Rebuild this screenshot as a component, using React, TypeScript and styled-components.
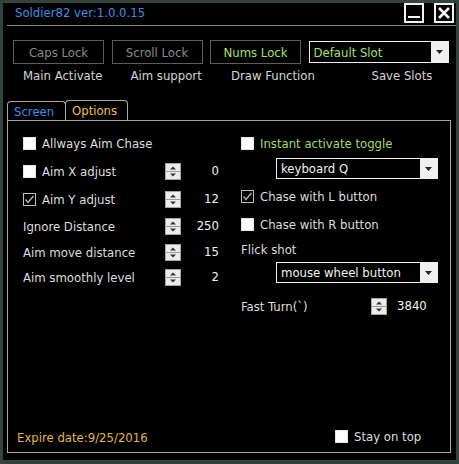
import React from "react";
import styled, { createGlobalStyle } from "styled-components";

const Global = createGlobalStyle`
  html, body { margin: 0; padding: 0; background: #000; }
  body {
    font-family: "DejaVu Sans Condensed", "DejaVu Sans", sans-serif;
    font-stretch: semi-condensed;
    font-size: 13px;
    color: #dcdcdc;
  }
  * { box-sizing: border-box; }
`;

const Window = styled.div`
  width: 459px;
  height: 464px;
  border: 3px solid #34433f;
  border-bottom-width: 4px;
  background: #000;
  display: flex;
  flex-direction: column;
`;

const TitleBar = styled.div`
  height: 23px;
  margin-left: 4px;
  border-bottom: 1px solid #8c8c8c;
  display: flex;
  align-items: flex-start;
`;

const Title = styled.div`
  flex: 1;
  color: #3f8fe6;
  padding-left: 8px;
  line-height: 20px;
`;

const TitleButtons = styled.div`
  display: flex;
  gap: 10px;
  margin-right: 2px;
`;

const TitleButton = styled.div`
  width: 20px;
  height: 20px;
  border: 2px solid #f2f2f2;
  display: flex;
  align-items: center;
  justify-content: center;
`;

const Header = styled.div`
  padding: 14px 0 0 10px;
`;

const ButtonRow = styled.div`
  display: grid;
  grid-template-columns: 91px 91px 91px 140px;
  column-gap: 7.5px;
  height: 24px;
`;

const KeyButton = styled.div<{ $color: string }>`
  border: 1px solid #5e5e5e;
  color: ${(p) => p.$color};
  display: flex;
  align-items: center;
  justify-content: center;
`;

const LabelRow = styled.div`
  display: grid;
  grid-template-columns: 91px 91px 91px 140px;
  column-gap: 7.5px;
  margin-top: 5px;
  height: 14px;
  line-height: 14px;
`;

const ColLabel = styled.div<{ $indent: number }>`
  padding-left: ${(p) => p.$indent}px;
  white-space: nowrap;
  color: #d4d4d4;
`;

const SelectBox = styled.div<{ $width: number; $height: number; $color: string; $indent?: number }>`
  width: ${(p) => p.$width}px;
  height: ${(p) => p.$height}px;
  margin-left: ${(p) => p.$indent ?? 0}px;
  align-self: center;
  border: 1px solid #f0f0f0;
  background: #000;
  color: ${(p) => p.$color};
  display: flex;
  align-items: stretch;
`;

const SelectText = styled.div`
  flex: 1;
  padding-left: 4px;
  display: flex;
  align-items: center;
  white-space: nowrap;
`;

const SelectArrow = styled.div`
  width: 17px;
  background: #f0f0f0;
  display: flex;
  align-items: center;
  justify-content: center;
`;

const TabStrip = styled.div`
  display: flex;
  align-items: flex-end;
  margin: 17px 0 0 4px;
  height: 20px;
`;

const Tab = styled.div<{ $color: string; $active?: boolean; $width: number }>`
  width: ${(p) => p.$width}px;
  height: ${(p) => (p.$active ? 20 : 19)}px;
  border: 1px solid #a8a8a8;
  border-bottom: none;
  border-radius: 4px 4px 0 0;
  color: ${(p) => p.$color};
  padding-left: 6px;
  line-height: 19px;
  margin-left: ${(p) => (p.$active ? -1 : 0)}px;
`;

const Panel = styled.div`
  flex: 1;
  margin: 0 5px 7px 4px;
  border: 1px solid #a8a8a8;
  display: flex;
  flex-direction: column;
`;

const Columns = styled.div`
  display: grid;
  grid-template-columns: 197px 197px;
  column-gap: 21px;
  align-items: start;
  padding: 8px 0 0 15px;
`;

const Column = styled.div`
  display: flex;
  flex-direction: column;
`;

const Row = styled.div<{ $h: number; $mt?: number }>`
  height: ${(p) => p.$h}px;
  margin-top: ${(p) => p.$mt ?? 0}px;
  display: flex;
  align-items: center;
  white-space: nowrap;
`;

const SpinRow = styled.div<{ $h: number; $cols: string; $mt?: number }>`
  height: ${(p) => p.$h}px;
  margin-top: ${(p) => p.$mt ?? 0}px;
  display: grid;
  grid-template-columns: ${(p) => p.$cols};
  align-items: center;
  white-space: nowrap;
`;

const Value = styled.div<{ $align: "left" | "right" }>`
  color: #f2f2f2;
  text-align: ${(p) => p.$align};
  padding-right: ${(p) => (p.$align === "right" ? 1 : 0)}px;
  padding-left: ${(p) => (p.$align === "left" ? 10 : 0)}px;
  margin-top: -2px;
`;

const Check = styled.div`
  display: flex;
  align-items: center;
  gap: 6px;
`;

const Box = styled.div<{ $checked?: boolean }>`
  width: 13px;
  height: 13px;
  flex: none;
  background: ${(p) => (p.$checked ? "#000" : "#fdfdfd")};
  border: 1px solid ${(p) => (p.$checked ? "#bdbdbd" : "#e4e4e4")};
  display: flex;
  align-items: center;
  justify-content: center;
`;

const Text = styled.span<{ $color?: string }>`
  color: ${(p) => p.$color ?? "#dedede"};
`;

const Footer = styled.div`
  margin-top: auto;
  display: grid;
  grid-template-columns: 318px auto;
  align-items: center;
  height: 20px;
  padding-left: 9px;
  margin-bottom: 6px;
`;

const Expire = styled.div`
  color: #e6b836;
  margin-top: 3px;
`;

const Arrow = () => (
  <svg width="7" height="4" viewBox="0 0 7 4">
    <polygon points="0,0 7,0 3.5,4" fill="#222" />
  </svg>
);

const Spin = () => (
  <svg width="16" height="17" viewBox="0 0 16 17">
    <rect x="0.5" y="0.5" width="15" height="16" fill="#ececec" stroke="#a4a4a4" />
    <line x1="1" y1="8.5" x2="15" y2="8.5" stroke="#9a9a9a" />
    <polygon points="5,6.5 11,6.5 8,3.5" fill="#333" />
    <polygon points="5,10.5 11,10.5 8,13.5" fill="#333" />
  </svg>
);

const CheckBox = ({ checked }: { checked?: boolean }) => (
  <Box $checked={checked}>
    {checked && (
      <svg width="11" height="11" viewBox="0 0 11 11">
        <polyline points="1.5,5.5 4,8.5 9.5,2" fill="none" stroke="#b4b4b4" strokeWidth="1.4" />
      </svg>
    )}
  </Box>
);

const Select = ({ text, width, height, color, indent }: { text: string; width: number; height: number; color: string; indent?: number }) => (
  <SelectBox $width={width} $height={height} $color={color} $indent={indent}>
    <SelectText>{text}</SelectText>
    <SelectArrow>
      <Arrow />
    </SelectArrow>
  </SelectBox>
);

export default function App() {
  return (
    <>
      <Global />
      <Window>
        <TitleBar>
          <Title>Soldier82 ver:1.0.0.15</Title>
          <TitleButtons>
            <TitleButton>
              <svg width="16" height="16" viewBox="0 0 16 16">
                <rect x="2" y="11" width="12" height="2" fill="#f2f2f2" />
              </svg>
            </TitleButton>
            <TitleButton>
              <svg width="16" height="16" viewBox="0 0 16 16">
                <path d="M3 3 L13 13 M13 3 L3 13" stroke="#f2f2f2" strokeWidth="2.6" />
              </svg>
            </TitleButton>
          </TitleButtons>
        </TitleBar>

        <Header>
          <ButtonRow>
            <KeyButton $color="#8a8a8a">Caps Lock</KeyButton>
            <KeyButton $color="#8a8a8a">Scroll Lock</KeyButton>
            <KeyButton $color="#a6e068">Nums Lock</KeyButton>
            <Select text="Default Slot" width={140} height={22} color="#a6e068" />
          </ButtonRow>
          <LabelRow>
            <ColLabel $indent={10}>Main Activate</ColLabel>
            <ColLabel $indent={19}>Aim support</ColLabel>
            <ColLabel $indent={21}>Draw Function</ColLabel>
            <ColLabel $indent={63}>Save Slots</ColLabel>
          </LabelRow>
        </Header>

        <TabStrip>
          <Tab $color="#3d8ee6" $width={59}>Screen</Tab>
          <Tab $color="#f0c23c" $width={63} $active>Options</Tab>
        </TabStrip>

        <Panel>
          <Columns>
            <Column>
              <Row $h={28}>
                <Check>
                  <CheckBox />
                  <Text>Allways Aim Chase</Text>
                </Check>
              </Row>
              <SpinRow $h={28} $cols="142px 16px 1fr">
                <Check>
                  <CheckBox />
                  <Text>Aim X adjust</Text>
                </Check>
                <Spin />
                <Value $align="right">0</Value>
              </SpinRow>
              <SpinRow $h={28} $cols="142px 16px 1fr">
                <Check>
                  <CheckBox checked />
                  <Text>Aim Y adjust</Text>
                </Check>
                <Spin />
                <Value $align="right">12</Value>
              </SpinRow>
              <SpinRow $h={26} $cols="142px 16px 1fr">
                <Text>Ignore Distance</Text>
                <Spin />
                <Value $align="right">250</Value>
              </SpinRow>
              <SpinRow $h={26} $cols="142px 16px 1fr">
                <Text>Aim move distance</Text>
                <Spin />
                <Value $align="right">15</Value>
              </SpinRow>
              <SpinRow $h={25} $cols="142px 16px 1fr">
                <Text>Aim smoothly level</Text>
                <Spin />
                <Value $align="right">2</Value>
              </SpinRow>
            </Column>

            <Column>
              <Row $h={28}>
                <Check>
                  <CheckBox />
                  <Text $color="#a6dc64">Instant activate toggle</Text>
                </Check>
              </Row>
              <Row $h={23}>
                <Select text="keyboard Q" width={163} height={21} color="#f2f2f2" indent={35} />
              </Row>
              <Row $h={32}>
                <Check>
                  <CheckBox checked />
                  <Text>Chase with L button</Text>
                </Check>
              </Row>
              <Row $h={25}>
                <Check>
                  <CheckBox />
                  <Text>Chase with R button</Text>
                </Check>
              </Row>
              <Row $h={25}>
                <Text>Flick shot</Text>
              </Row>
              <Row $h={21}>
                <Select text="mouse wheel button" width={163} height={21} color="#f2f2f2" indent={35} />
              </Row>
              <SpinRow $h={22} $mt={12} $cols="130px 16px auto">
                <Text>Fast Turn(`)</Text>
                <Spin />
                <Value $align="left">3840</Value>
              </SpinRow>
            </Column>
          </Columns>

          <Footer>
            <Expire>Expire date:9/25/2016</Expire>
            <Check>
              <CheckBox />
              <Text>Stay on top</Text>
            </Check>
          </Footer>
        </Panel>
      </Window>
    </>
  );
}
